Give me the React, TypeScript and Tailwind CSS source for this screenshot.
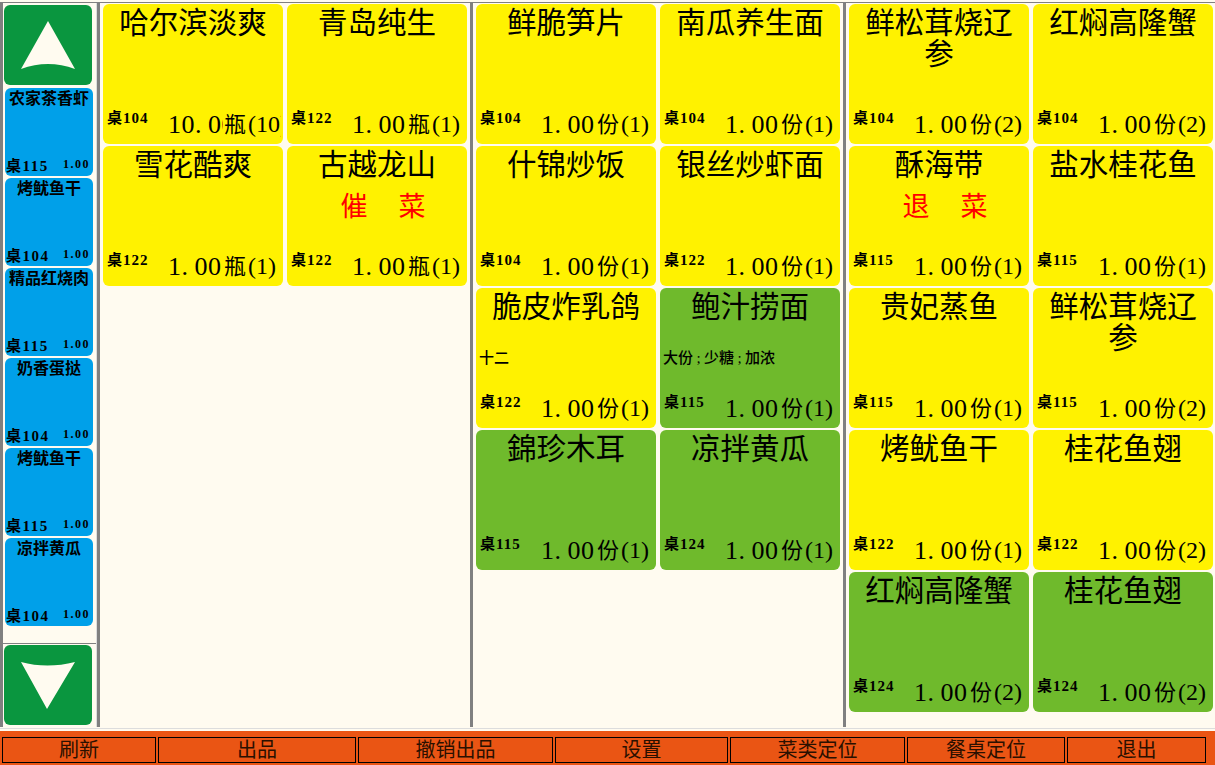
const FONT = "font-['Liberation_Serif','Noto_Sans_CJK_SC',serif]";

type Item = { t: string; d: string; q: string; u: string; n?: string; note?: string; red?: string; g?: boolean };

const col1: Item[] = [
  { t: "哈尔滨淡爽", d: "104", q: "10.00", u: "瓶", n: "(10)" },
  { t: "青岛纯生", d: "122", q: "1.00", u: "瓶", n: "(1)" },
  { t: "雪花酷爽", d: "122", q: "1.00", u: "瓶", n: "(1)" },
  { t: "古越龙山", d: "122", q: "1.00", u: "瓶", n: "(1)", red: "催" },
];
const col2: Item[] = [
  { t: "鲜脆笋片", d: "104", q: "1.00", u: "份", n: "(1)" },
  { t: "南瓜养生面", d: "104", q: "1.00", u: "份", n: "(1)" },
  { t: "什锦炒饭", d: "104", q: "1.00", u: "份", n: "(1)" },
  { t: "银丝炒虾面", d: "122", q: "1.00", u: "份", n: "(1)" },
  { t: "脆皮炸乳鸽", d: "122", q: "1.00", u: "份", n: "(1)", note: "十二" },
  { t: "鲍汁捞面", d: "115", q: "1.00", u: "份", n: "(1)", note: "大份;少糖;加浓", g: true },
  { t: "錦珍木耳", d: "115", q: "1.00", u: "份", n: "(1)", g: true },
  { t: "凉拌黄瓜", d: "124", q: "1.00", u: "份", n: "(1)", g: true },
];
const col3: Item[] = [
  { t: "鲜松茸烧辽参", d: "104", q: "1.00", u: "份", n: "(2)" },
  { t: "红焖高隆蟹", d: "104", q: "1.00", u: "份", n: "(2)" },
  { t: "酥海带", d: "115", q: "1.00", u: "份", n: "(1)", red: "退" },
  { t: "盐水桂花鱼", d: "115", q: "1.00", u: "份", n: "(1)" },
  { t: "贵妃蒸鱼", d: "115", q: "1.00", u: "份", n: "(1)" },
  { t: "鲜松茸烧辽参", d: "115", q: "1.00", u: "份", n: "(2)" },
  { t: "烤鱿鱼干", d: "122", q: "1.00", u: "份", n: "(1)" },
  { t: "桂花鱼翅", d: "122", q: "1.00", u: "份", n: "(2)" },
  { t: "红焖高隆蟹", d: "124", q: "1.00", u: "份", n: "(2)", g: true },
  { t: "桂花鱼翅", d: "124", q: "1.00", u: "份", n: "(2)", g: true },
];

const side = [
  ["农家茶香虾", "115"],
  ["烤鱿鱼干", "104"],
  ["精品红烧肉", "115"],
  ["奶香蛋挞", "104"],
  ["烤鱿鱼干", "115"],
  ["凉拌黄瓜", "104"],
];

const footer: [string, string][] = [
  ["刷新", "w-[154px]"],
  ["出品", "w-[198px]"],
  ["撤销出品", "w-[195px]"],
  ["设置", "w-[173px]"],
  ["菜类定位", "w-[175px]"],
  ["餐桌定位", "w-[158px]"],
  ["退出", "w-[139px]"],
];

function Note({ text }: { text: string }) {
  const parts = text.split(";");
  return (
    <div className="mt-[19px] pl-[3px] text-[15px] leading-[18px] font-medium whitespace-nowrap">
      {parts.map((p, i) => (
        <span key={i}>
          {i > 0 && <span className="inline-block w-[11px] text-center">;</span>}
          {p}
        </span>
      ))}
    </div>
  );
}

function Card({ it }: { it: Item }) {
  const [a, b] = it.q.split(".");
  return (
    <div className={`h-[140px] w-[180px] rounded-[6px] flex flex-col overflow-hidden text-black ${it.g ? "bg-[#6FBA2C]" : "bg-[#FFF200]"}`}>
      <div className="h-[38px] mt-[4px] px-[14px] shrink-0 text-center text-[29.5px] leading-[31px]">{it.t}</div>
      {it.red && (
        <div className="mt-[2px] h-[34px] pl-[12px] flex justify-center gap-[31px] text-[27px] leading-[34px] text-[#FF0000]">
          <span>{it.red}</span>
          <span>菜</span>
        </div>
      )}
      {it.note && <Note text={it.note} />}
      <div className="mt-auto mb-[5px] pl-[4px] flex items-end h-[31px] whitespace-nowrap">
        <div className="w-[61px] shrink-0 text-[15px] leading-[18px] tracking-[1px] font-bold mb-[12px]">桌{it.d}</div>
        <div className="w-[55px] shrink-0 overflow-hidden text-[26px] leading-[28px] tracking-[0.5px]">
          {a}
          <span className="inline-block w-[13px]">.</span>
          {b}
        </div>
        <div className="flex-1 overflow-hidden text-[24px] leading-[28px] mr-[2px]">
          <span className="inline-block w-[25px] text-[22px] pl-[1px]">{it.u}</span>
          {it.n}
        </div>
      </div>
    </div>
  );
}

function Column({ items }: { items: Item[] }) {
  return (
    <div className="w-[373px] shrink-0 border-l-[3px] border-[#808080] pl-[3px] pt-[1px]">
      <div className="grid grid-cols-[180px_180px] gap-x-[4px] gap-y-[2px] content-start">
        {items.map((it, i) => (
          <Card key={i} it={it} />
        ))}
      </div>
    </div>
  );
}

function Arrow({ down }: { down?: boolean }) {
  return (
    <div className="ml-[1px] h-[80px] w-[88px] rounded-[6px] bg-[#0A963F] flex items-center justify-center shrink-0">
      <svg width="56" height="50" viewBox="0 0 56 50">
        {down ? (
          <path d="M1 2 Q27 9 55 2 L27 49 Z" fill="#FFFBF0" />
        ) : (
          <path d="M28 1 L55 49 Q28 39 1 49 Z" fill="#FFFBF0" />
        )}
      </svg>
    </div>
  );
}

export default function App() {
  return (
    <div className={`${FONT} w-[1215px] h-[765px] bg-[#FFFBF0] flex flex-col overflow-hidden`}>
      <div className="h-[729px] shrink-0 border-b border-[#DDDDDD] pt-[2px]">
        <div className="h-[725px] border-t-[1px] border-[#808080] flex">
          <div className="w-[97px] shrink-0 border-l-[3px] border-r border-[#808080] border-r-[#DDDDDD] flex flex-col pt-[2px]">
            <Arrow />
            <div className="flex flex-col gap-[2px] mt-[3px] h-[556px] border-b border-[#808080]">
              {side.map(([t, d], i) => (
                <div key={i} className="h-[88px] w-[88px] ml-[2px] rounded-[6px] bg-[#00A0E9] flex flex-col text-black shrink-0">
                  <div className="text-center text-[16px] leading-[20px] mt-[1px] font-bold whitespace-nowrap">{t}</div>
                  <div className="mt-auto mb-[1px] flex justify-between items-end pl-[1px] pr-[3px] whitespace-nowrap">
                    <span className="text-[15px] leading-[18px] font-bold tracking-[1.5px]">桌{d}</span>
                    <span className="text-[12px] leading-[16px] font-bold tracking-[1.5px] mb-[3px]">1.00</span>
                  </div>
                </div>
              ))}
            </div>
            <div className="mt-[1px]">
              <Arrow down />
            </div>
          </div>
          <Column items={col1} />
          <Column items={col2} />
          <Column items={col3} />
        </div>
      </div>
      <div className="mt-[2px] flex-1 bg-[#EA5514] pt-[6px] pl-[2px] flex gap-[2px]">
        {footer.map(([t, w]) => (
          <div key={t} className={`${w} h-[26px] border border-black flex items-center justify-center text-[20px] leading-[24px] text-[#2a1000]`}>
            {t}
          </div>
        ))}
      </div>
    </div>
  );
}
